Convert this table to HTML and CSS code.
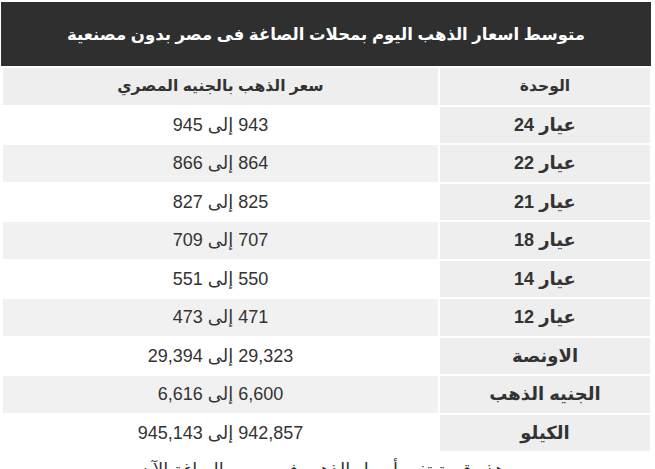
FILE: index.html
```html
<!DOCTYPE html>
<html lang="ar" dir="rtl">
<head>
<meta charset="utf-8">
<title>أسعار الذهب</title>
<link rel="stylesheet" href="styles.css">
</head>
<body>
<div class="wrap">
  <div class="title">متوسط اسعار الذهب اليوم بمحلات الصاغة فى مصر بدون مصنعية</div>
  <table class="prices">
    <tr class="head"><th class="unit">الوحدة</th><th class="value">سعر الذهب بالجنيه المصري</th></tr>
    <tr><td class="unit">عيار 24</td><td class="value">943 إلى 945</td></tr>
    <tr class="alt"><td class="unit">عيار 22</td><td class="value">864 إلى 866</td></tr>
    <tr><td class="unit">عيار 21</td><td class="value">825 إلى 827</td></tr>
    <tr class="alt"><td class="unit">عيار 18</td><td class="value">707 إلى 709</td></tr>
    <tr><td class="unit">عيار 14</td><td class="value">550 إلى 551</td></tr>
    <tr class="alt"><td class="unit">عيار 12</td><td class="value">471 إلى 473</td></tr>
    <tr><td class="unit">الاونصة</td><td class="value">29,323 إلى 29,394</td></tr>
    <tr class="alt"><td class="unit">الجنيه الذهب</td><td class="value">6,600 إلى 6,616</td></tr>
    <tr><td class="unit">الكيلو</td><td class="value">942,857 إلى 945,143</td></tr>
  </table>
  <p class="note">وهذه قيمة تغير أسعار الذهب في مصر بالصاغة الآن</p>
</div>
</body>
</html>
```
FILE: styles.css
```css
html, body {
  margin: 0;
  padding: 0;
  background: #ffffff;
}

body {
  font-family: "Liberation Sans", "DejaVu Sans", Arial, sans-serif;
  color: #333333;
}

.wrap {
  width: 651px;
  margin: 2px 3px 0 1px;
}

.title {
  width: 650px;
  height: 64px;
  margin-right: 1px;
  background: #2f2f2f;
  color: #ffffff;
  font-weight: bold;
  font-size: 16.5px;
  line-height: 64px;
  text-align: center;
}

.prices {
  width: 651px;
  border-collapse: separate;
  border-spacing: 2px;
  table-layout: fixed;
}

.prices th,
.prices td {
  height: 36.5px;
  padding: 0;
  text-align: center;
  vertical-align: middle;
  font-size: 18px;
  color: #333333;
}

.prices th {
  font-size: 15.6px;
  font-weight: bold;
  background: #eeeeee;
}

.prices .unit {
  width: 210px;
  background: #eeeeee;
  font-weight: bold;
}

.prices td.value {
  font-weight: normal;
  background: #ffffff;
}

.prices tr.alt td.value {
  background: #f1f1f1;
}

.prices tr.head th.value {
  background: #eeeeee;
}

.note {
  margin: 4px 0 0 0;
  font-size: 18px;
  line-height: 26px;
  text-align: center;
}
```
